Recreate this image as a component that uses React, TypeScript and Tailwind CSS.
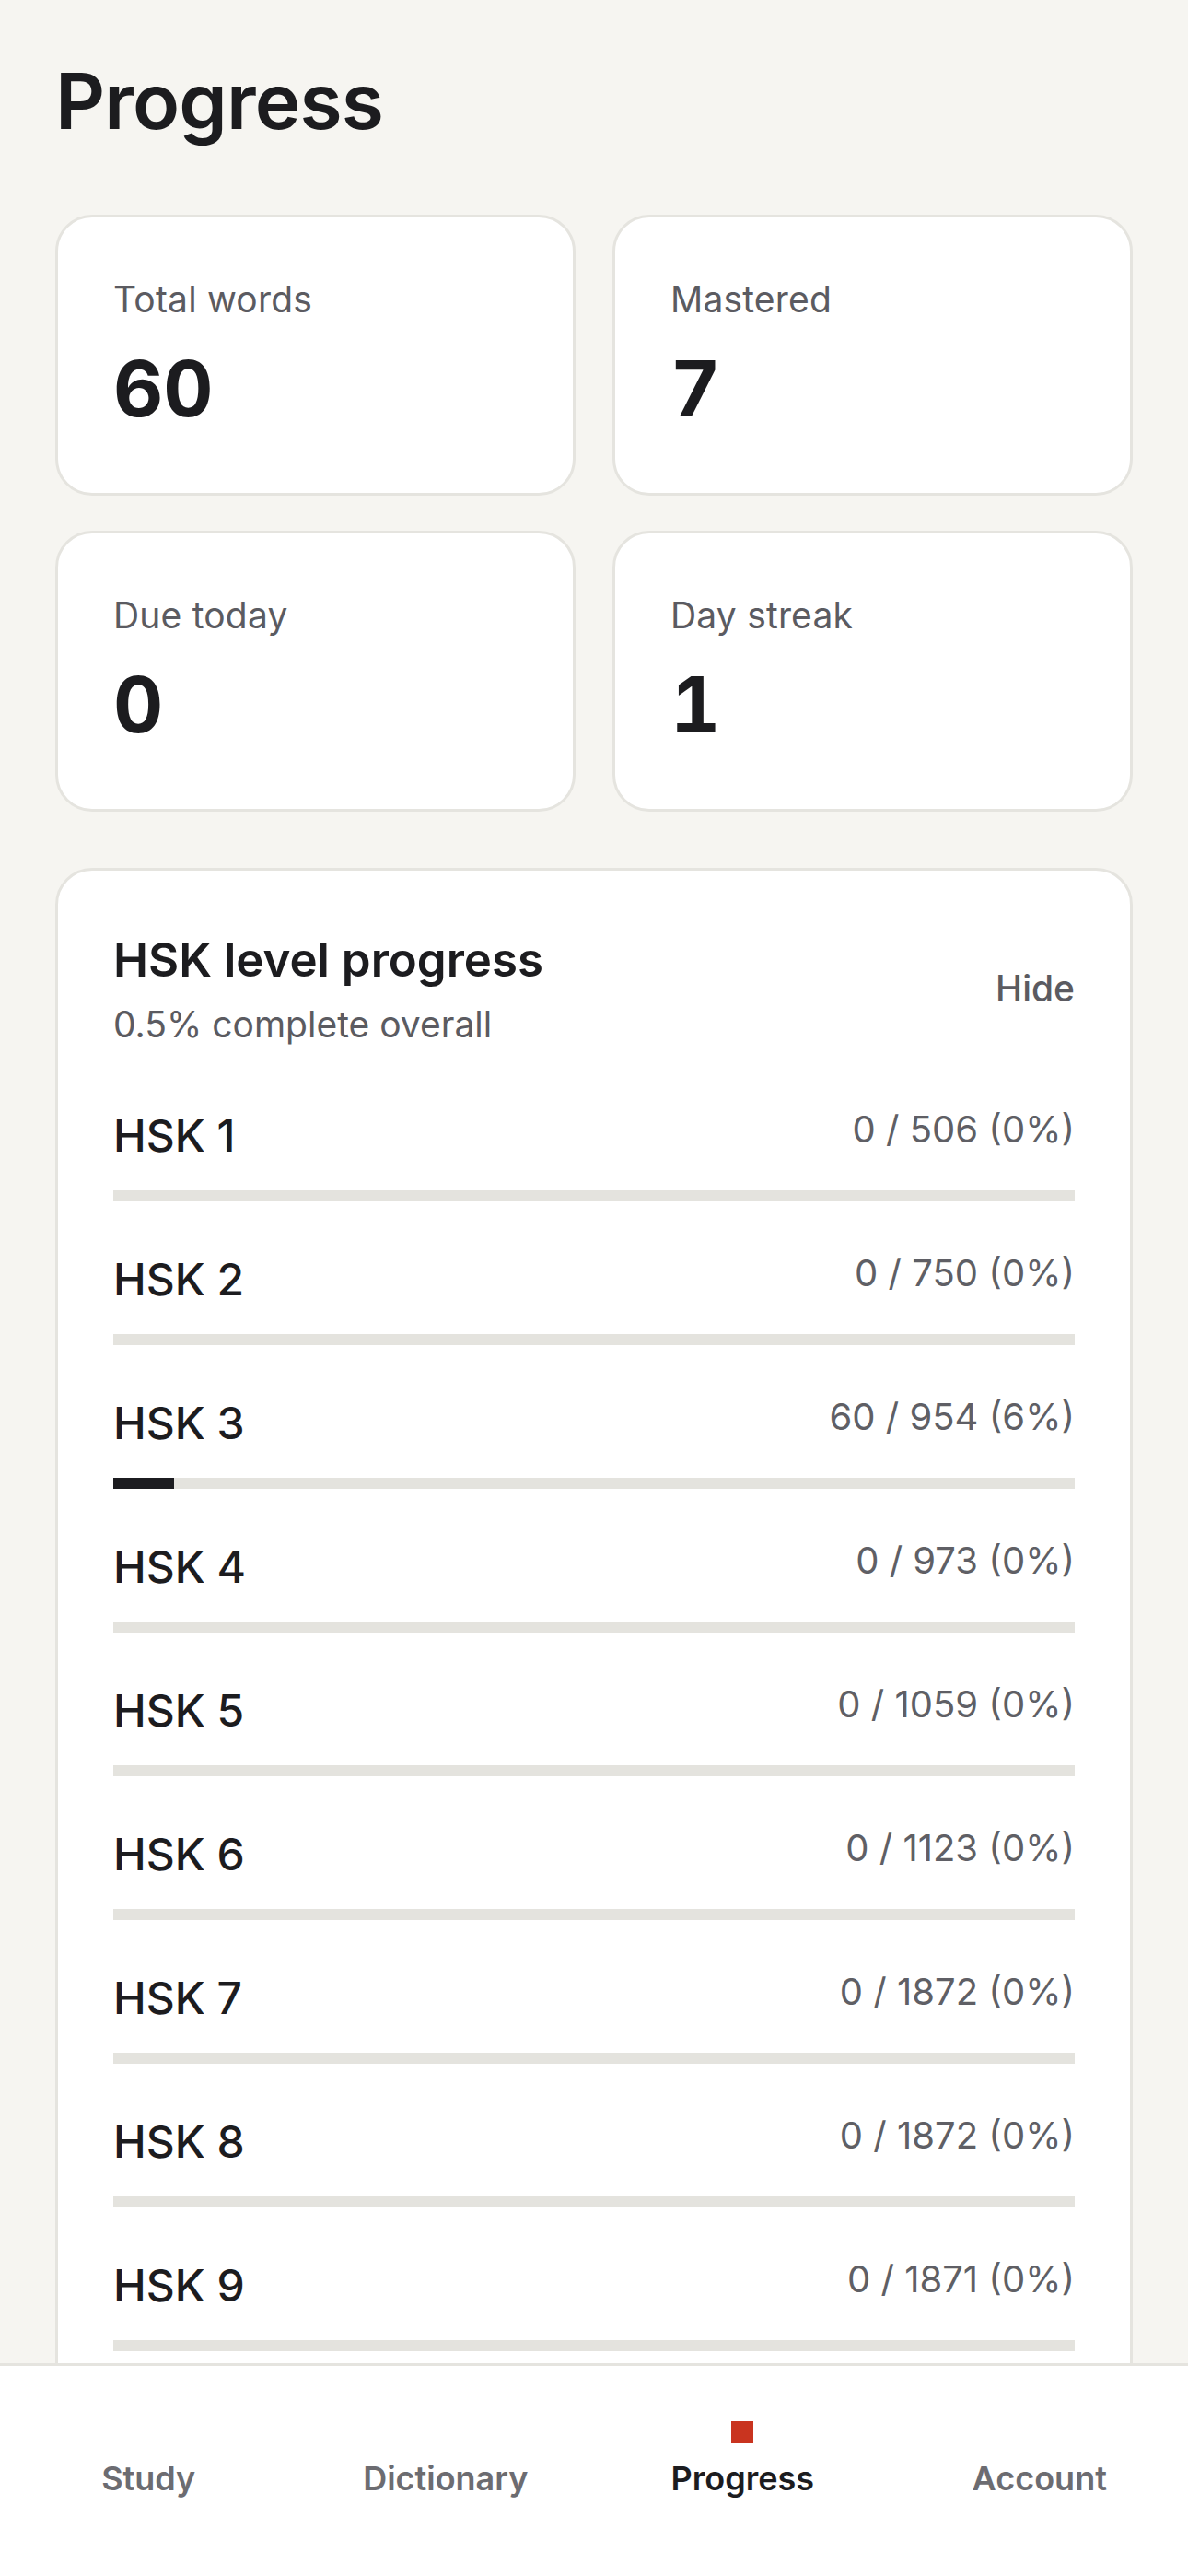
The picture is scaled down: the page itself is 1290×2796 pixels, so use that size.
import React from "react";

const levels = [
  { name: "HSK 1", done: 0, total: 506 },
  { name: "HSK 2", done: 0, total: 750 },
  { name: "HSK 3", done: 60, total: 954 },
  { name: "HSK 4", done: 0, total: 973 },
  { name: "HSK 5", done: 0, total: 1059 },
  { name: "HSK 6", done: 0, total: 1123 },
  { name: "HSK 7", done: 0, total: 1872 },
  { name: "HSK 8", done: 0, total: 1872 },
  { name: "HSK 9", done: 0, total: 1871 },
];

const stats = [
  { label: "Total words", value: "60" },
  { label: "Mastered", value: "7" },
  { label: "Due today", value: "0" },
  { label: "Day streak", value: "1" },
];

const tabs = ["Study", "Dictionary", "Progress", "Account"];

export default function App() {
  return (
    <div
      className="flex h-[2796px] w-full flex-col overflow-hidden bg-[#f6f5f1] text-[#1c1c1f]"
      style={{ fontFamily: "Inter, 'Noto Sans', 'Liberation Sans', sans-serif" }}
    >
      <main className="min-h-0 flex-1 overflow-hidden px-[60px] pt-[59px]">
        <h1 className="text-[84px] font-semibold leading-[101px] tracking-[-0.01em]">Progress</h1>

        <div className="mt-[73px] grid grid-cols-2 gap-x-[40px] gap-y-[38px]">
          {stats.map((s) => (
            <div
              key={s.label}
              className="rounded-[40px] border-[3px] border-[#e5e4df] bg-white px-[60px] py-[60px]"
            >
              <div className="text-[39px] leading-[58px] tracking-[0.005em] text-[#5b5b61]">{s.label}</div>
              <div className="mt-[15px] text-[84px] font-bold leading-[106px] tabular-nums">
                {s.value}
              </div>
            </div>
          ))}
        </div>

        <section className="mt-[61px] rounded-[40px] border-[3px] border-[#e5e4df] bg-white px-[60px] py-[60px]">
          <div className="flex items-center justify-between">
            <div>
              <div className="text-[51px] font-semibold leading-[73px]">HSK level progress</div>
              <div className="mt-[5px] text-[39px] leading-[58px] text-[#5b5b61]">
                0.5% complete overall
              </div>
            </div>
            <div className="text-[39px] font-medium leading-[58px] text-[#5b5b61]">Hide</div>
          </div>

          <div className="mt-[56px] flex flex-col gap-[49px]">
            {levels.map((l) => {
              const pct = (l.done / l.total) * 100;
              return (
                <div key={l.name}>
                  <div className="flex items-start justify-between">
                    <div className="text-[48px] font-medium leading-[72px]">{l.name}</div>
                    <div className="text-[40px] leading-[58px] text-[#5f5f65]">
                      {l.done} / {l.total} ({Math.round(pct)}%)
                    </div>
                  </div>
                  <div className="mt-[23px] h-[12px] w-full bg-[#e4e3de]">
                    <div className="h-full bg-[#1c1c20]" style={{ width: `${pct}%` }} />
                  </div>
                </div>
              );
            })}
          </div>
        </section>
      </main>

      <nav className="grid h-[231px] shrink-0 grid-cols-4 border-t-[3px] border-[#e5e4df] bg-white pt-[60px]">
        {tabs.map((t) => {
          const active = t === "Progress";
          return (
            <div key={t} className="flex flex-col items-center">
              <div className={`h-[24px] w-[24px] ${active ? "bg-[#c9341f]" : "bg-transparent"}`} />
              <div
                className={`mt-[13px] text-[36px] font-semibold leading-[50px] ${
                  active ? "text-[#1c1c1f]" : "text-[#6c6c71]"
                }`}
              >
                {t}
              </div>
            </div>
          );
        })}
      </nav>
    </div>
  );
}
